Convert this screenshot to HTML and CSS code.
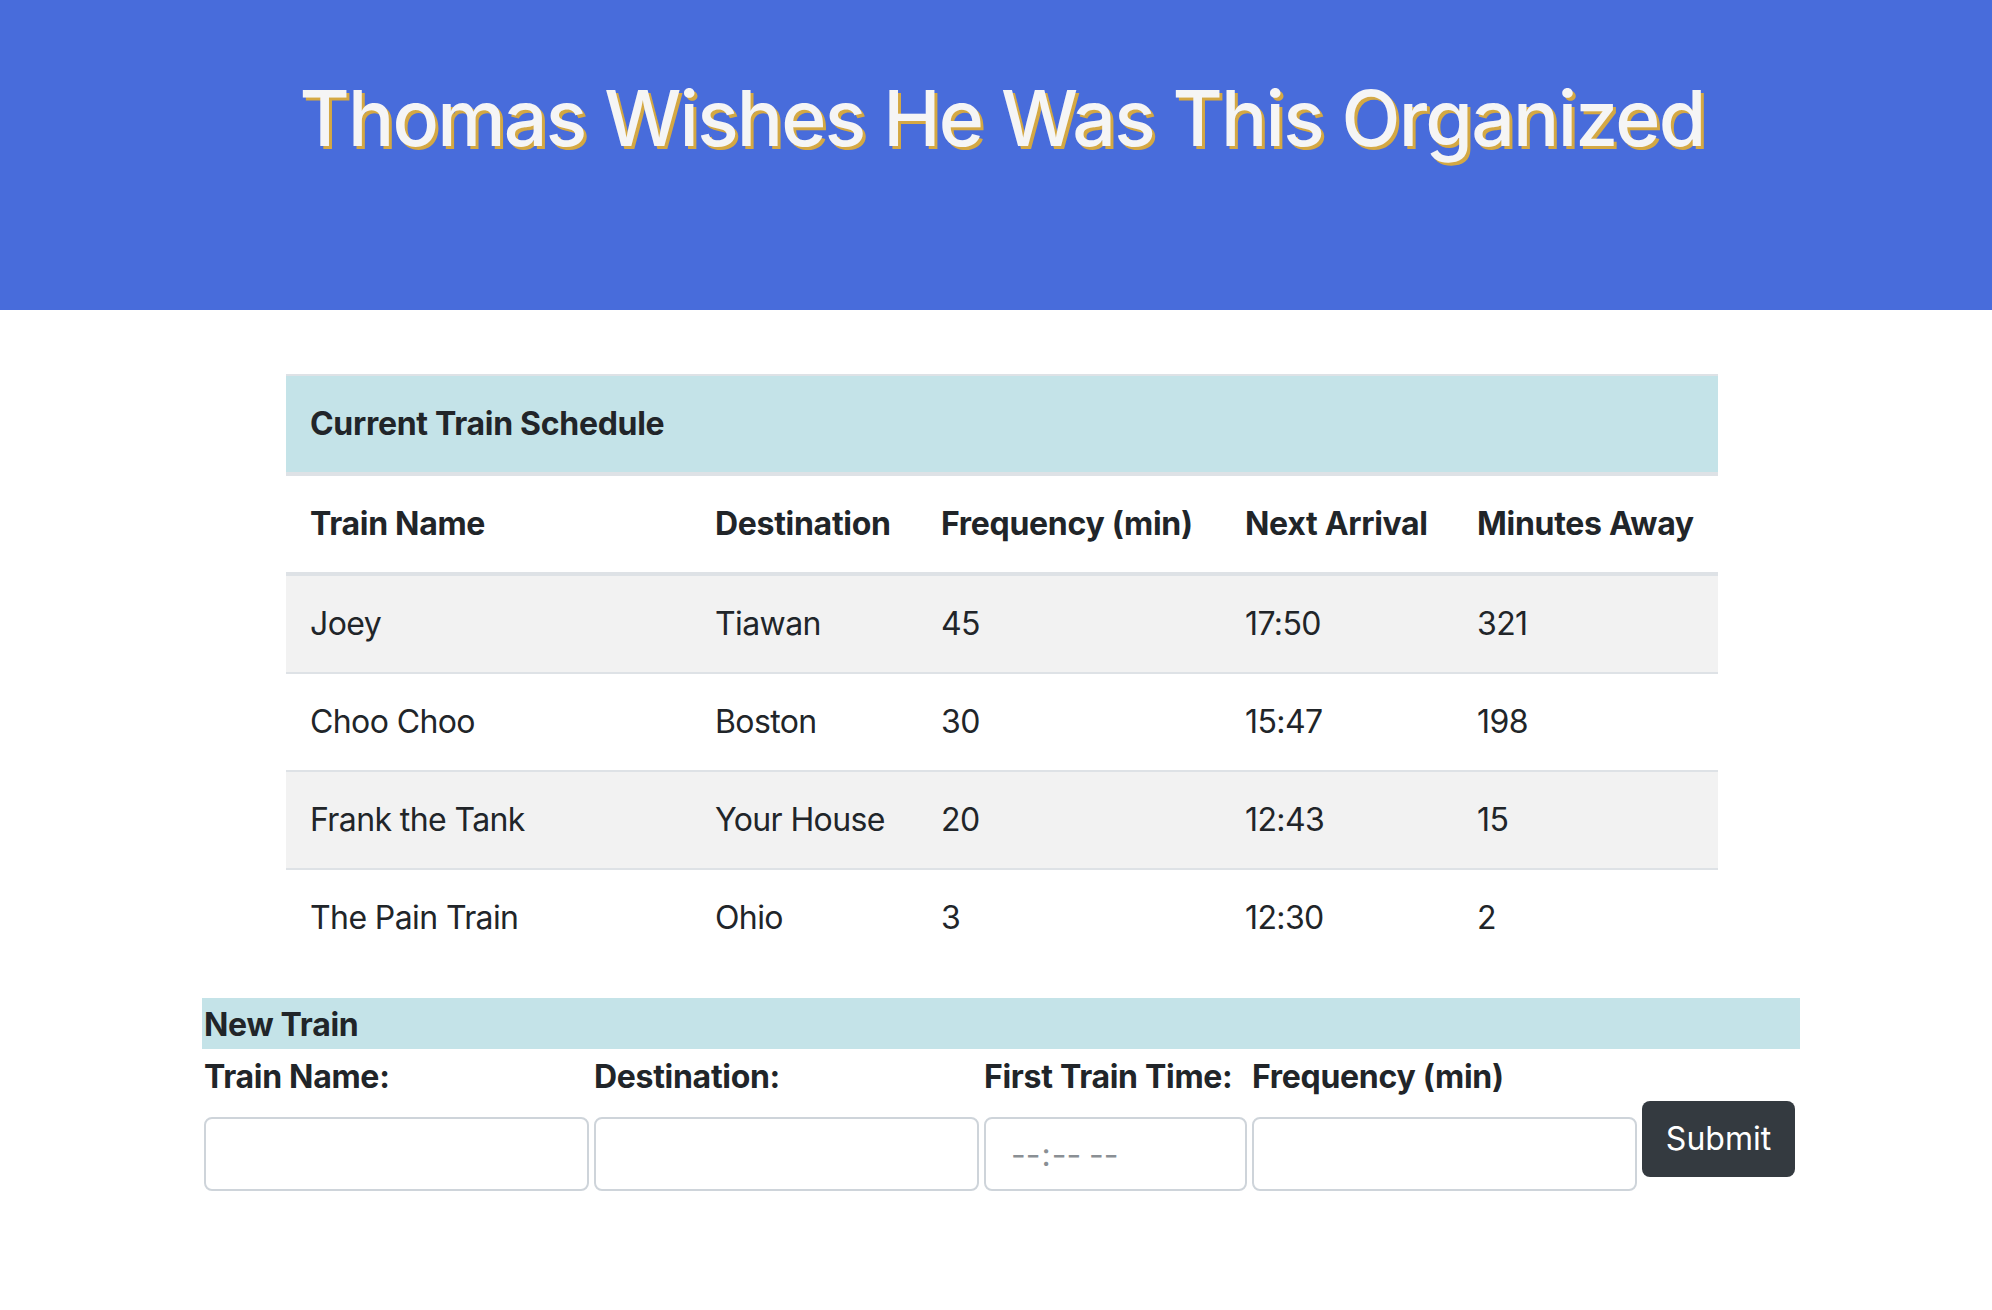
FILE: index.html
```html
<!DOCTYPE html>
<html lang="en">
<head>
<meta charset="utf-8">
<title>Train Scheduler</title>
<link rel="stylesheet" href="styles.css">
</head>
<body>
<header class="hero">
  <h1 class="hero-title">Thomas Wishes He Was This Organized</h1>
</header>

<main class="page">
  <table class="schedule">
    <colgroup>
      <col class="c-name"><col class="c-dest"><col class="c-freq"><col class="c-next"><col class="c-away">
    </colgroup>
    <thead>
      <tr class="caption-row"><th colspan="5">Current Train Schedule</th></tr>
      <tr class="head-row">
        <th>Train Name</th><th>Destination</th><th>Frequency (min)</th><th>Next Arrival</th><th>Minutes Away</th>
      </tr>
    </thead>
    <tbody>
      <tr class="striped"><td>Joey</td><td>Tiawan</td><td>45</td><td>17:50</td><td>321</td></tr>
      <tr><td>Choo Choo</td><td>Boston</td><td>30</td><td>15:47</td><td>198</td></tr>
      <tr class="striped"><td>Frank the Tank</td><td>Your House</td><td>20</td><td>12:43</td><td>15</td></tr>
      <tr class="last"><td>The Pain Train</td><td>Ohio</td><td>3</td><td>12:30</td><td>2</td></tr>
    </tbody>
  </table>

  <section class="new-train">
    <h2 class="bar">New Train</h2>
    <form class="form-row">
      <div class="field wide">
        <label class="label" for="name">Train Name:</label>
        <input class="input" id="name" type="text">
      </div>
      <div class="field wide">
        <label class="label" for="dest">Destination:</label>
        <input class="input" id="dest" type="text">
      </div>
      <div class="field narrow">
        <label class="label" for="first">First Train Time:</label>
        <input class="input time" id="first" type="time">
      </div>
      <div class="field wide">
        <label class="label" for="freq">Frequency (min)</label>
        <input class="input" id="freq" type="text">
      </div>
      <button class="submit" type="button">Submit</button>
    </form>
  </section>
</main>
</body>
</html>
```

FILE: styles.css
```css
* { box-sizing: border-box; }

html, body {
  margin: 0;
  padding: 0;
  background: #ffffff;
}

body {
  font-family: Inter, "Noto Sans", "Liberation Sans", sans-serif;
  font-size: 32px;
  color: #212529;
}

.hero {
  height: 310px;
  background: #486cdb;
  padding: 70px 0 0 12px;
}

.hero-title {
  margin: 0;
  text-align: center;
  font-size: 77px;
  line-height: 96px;
  font-weight: 500;
  letter-spacing: -1.8px;
  color: #f5f5f5;
  text-shadow: 3px 3px 0 #d4a843;
}

.page {
  width: 1598px;
  margin: 64px 0 0 202px;
}

.schedule {
  width: 1432px;
  margin: 0 0 32px 84px;
  border-collapse: separate;
  border-spacing: 0;
  table-layout: fixed;
}

.c-name { width: 405px; }
.c-dest { width: 226px; }
.c-freq { width: 304px; }
.c-next { width: 232px; }
.c-away { width: 265px; }

.schedule th,
.schedule td {
  padding: 24px;
  line-height: 48px;
  text-align: left;
  vertical-align: middle;
  white-space: nowrap;
}

.schedule th { font-weight: 700; letter-spacing: -0.3px; }
.schedule td { font-weight: 400; letter-spacing: -0.6px; }

.caption-row th {
  background: #c4e3e8;
  border-top: 2px solid #dee2e6;
  border-bottom: 4px solid #dee2e6;
}

.head-row th {
  border-bottom: 4px solid #dee2e6;
}

.schedule tbody td {
  border-bottom: 2px solid #dee2e6;
}

.schedule tbody tr.last td {
  border-bottom: none;
}

.striped td { background: #f2f2f2; }

.bar {
  margin: 0;
  height: 51px;
  line-height: 53px;
  padding-left: 2px;
  background: #c4e3e8;
  font-size: 32px;
  font-weight: 700;
  letter-spacing: -0.3px;
}

.form-row {
  display: flex;
  align-items: flex-start;
  gap: 5px;
  padding: 3px 0 0 2px;
}

.field {
  display: flex;
  flex-direction: column;
}

.field.wide { width: 385px; }
.field.narrow { width: 263px; }

.label {
  display: block;
  font-weight: 700;
  letter-spacing: -0.3px;
  line-height: 48px;
  padding-top: 1px;
  margin-bottom: 16px;
  white-space: nowrap;
}

.input {
  width: 100%;
  height: 74px;
  border: 2px solid #ced4da;
  border-radius: 8px;
  background: #fff;
  font-family: Inter, "Noto Sans", sans-serif;
  font-size: 32px;
  padding: 0 24px;
  color: #495057;
}

.time { color: #8a8f94; }
.time::-webkit-calendar-picker-indicator { display: none; }
.time::-webkit-datetime-edit { color: #8a8f94; padding: 0; }

.submit {
  margin-top: 49px;
  width: 153px;
  height: 76px;
  border: none;
  border-radius: 8px;
  background: #343a40;
  color: #ffffff;
  font-family: Inter, "Noto Sans", sans-serif;
  font-size: 32px;
  line-height: 48px;
  padding: 0;
}
```
